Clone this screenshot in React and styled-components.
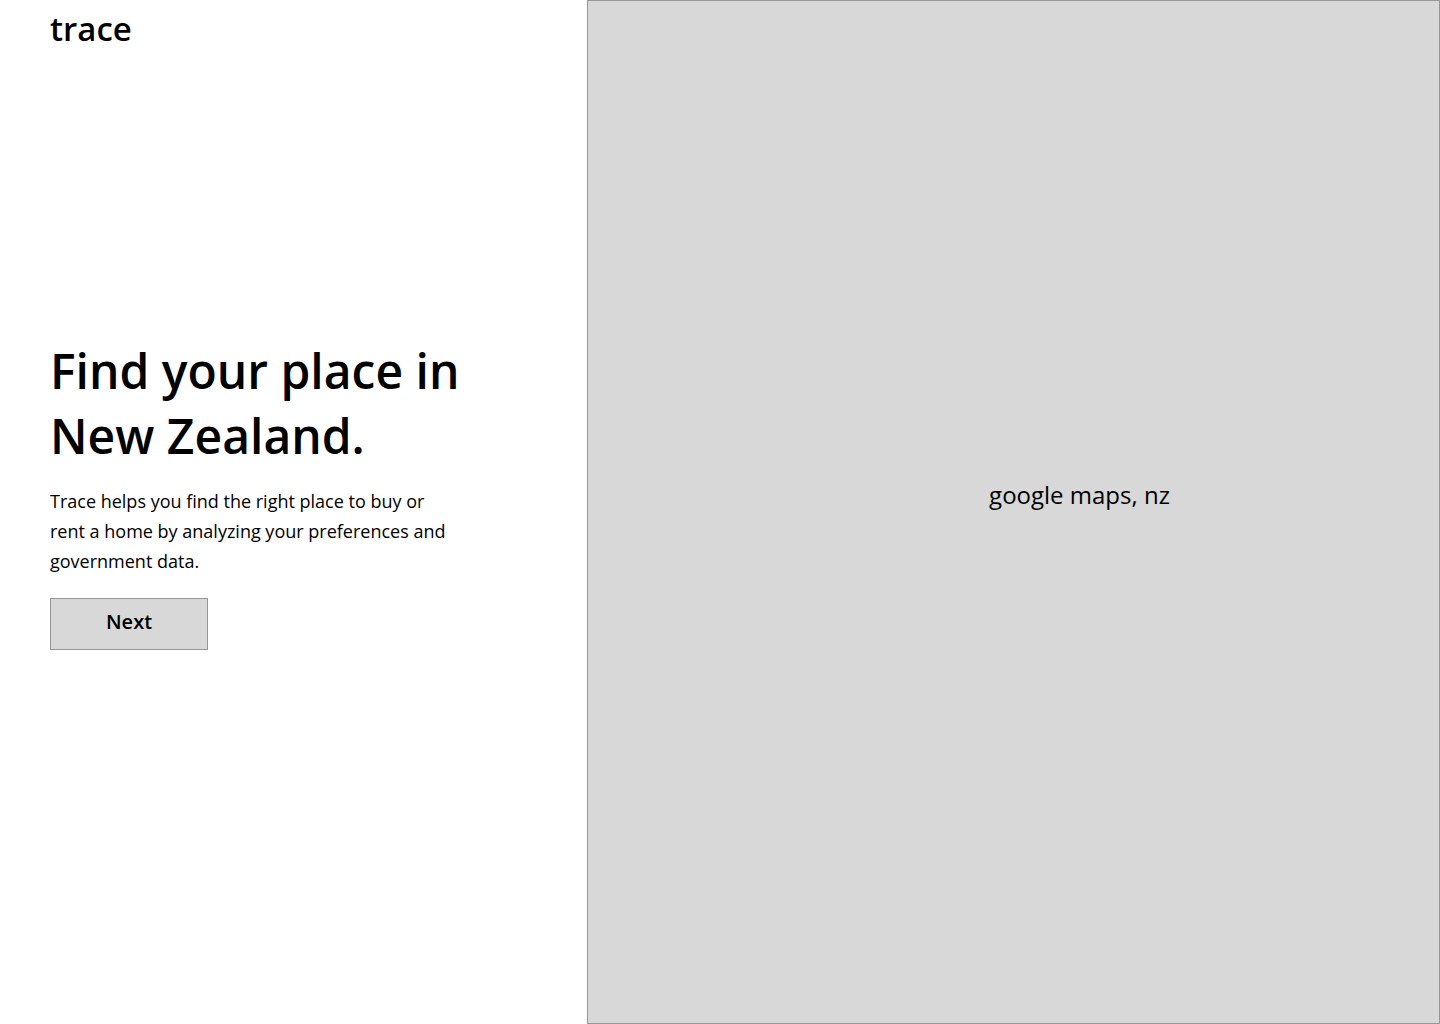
import styled, { createGlobalStyle } from "styled-components";

const GlobalStyle = createGlobalStyle`
  html, body {
    margin: 0;
    padding: 0;
    background: #fff;
  }
  body {
    font-family: "Open Sans", "Liberation Sans", sans-serif;
    color: #000;
  }
  * {
    box-sizing: border-box;
  }
`;

const Page = styled.div`
  display: flex;
  width: 1440px;
  height: 1024px;
`;

const Side = styled.section`
  width: 587px;
  flex-shrink: 0;
  display: flex;
  flex-direction: column;
  padding: 7px 0 0 50px;
`;

const Logo = styled.div`
  font-size: 33px;
  font-weight: 600;
  line-height: 44px;
`;

const Hero = styled.div`
  margin-top: 287px;
  display: flex;
  flex-direction: column;
`;

const Title = styled.h1`
  margin: 0;
  font-size: 48px;
  font-weight: 600;
  line-height: 65px;
`;

const Lead = styled.p`
  margin: 18px 0 0;
  max-width: 410px;
  font-size: 18px;
  line-height: 30px;
`;

const NextButton = styled.button`
  margin-top: 22px;
  width: 158px;
  height: 52px;
  background: #d8d8d8;
  border: 1px solid #979797;
  font-family: inherit;
  font-size: 20px;
  font-weight: 600;
  color: #000;
  padding: 0 0 6px;
  cursor: pointer;
`;

const MapArea = styled.section`
  flex: 1;
  background: #d8d8d8;
  border: 1px solid #979797;
  display: flex;
  align-items: center;
  justify-content: center;
  padding: 0 0 36px 132px;
  font-size: 24px;
`;

export default function App() {
  return (
    <>
      <GlobalStyle />
      <Page>
        <Side>
          <Logo>trace</Logo>
          <Hero>
            <Title>
              Find your place in
              <br />
              New Zealand.
            </Title>
            <Lead>
              Trace helps you find the right place to buy or rent a home by
              analyzing your preferences and government data.
            </Lead>
            <div>
              <NextButton>Next</NextButton>
            </div>
          </Hero>
        </Side>
        <MapArea>google maps, nz</MapArea>
      </Page>
    </>
  );
}
